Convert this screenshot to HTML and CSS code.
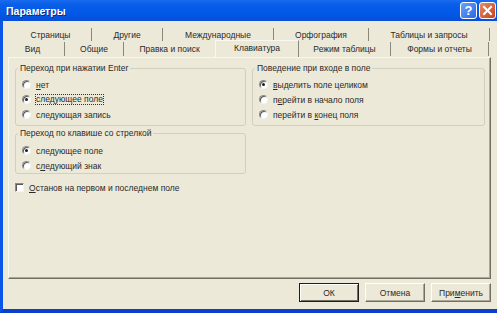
FILE: index.html
```html
<!DOCTYPE html>
<html lang="ru">
<head>
    <meta charset="UTF-8">
    <title>Параметры</title>
    <link rel="stylesheet" href="styles.css">
</head>
<body>
    <div class="window">
        <div class="titlebar">
            <span class="title">Параметры</span>
            <div class="caption-btns">
                <span class="cbtn help">?</span>
                <span class="cbtn close">
                    <svg width="11" height="11" viewBox="0 0 11 11">
                        <path d="M2 2 L9 9 M9 2 L2 9" stroke="#fff" stroke-width="2" stroke-linecap="square"/>
                    </svg>
                </span>
            </div>
        </div>
        <div class="frame">
            <!-- вкладки: задний ряд -->
            <div class="tabrow tabrow-back">
                <div class="tab t-pages">Страницы</div>
                <div class="tab t-other">Другие</div>
                <div class="tab t-intl">Международные</div>
                <div class="tab t-spell">Орфография</div>
                <div class="tab t-tables">Таблицы и запросы</div>
            </div>
            <!-- вкладки: передний ряд -->
            <div class="tabrow tabrow-front">
                <div class="tab t-view">Вид</div>
                <div class="tab t-general">Общие</div>
                <div class="tab t-edit">Правка и поиск</div>
                <div class="tab t-keys tab-active">Клавиатура</div>
                <div class="tab t-sheet">Режим таблицы</div>
                <div class="tab t-forms">Формы и отчеты</div>
            </div>
            <div class="panel">
                <div class="col">
                    <fieldset class="group">
                        <legend>Переход при нажатии Enter</legend>
                        <div class="opt"><span class="radio"></span><span><u>н</u>ет</span></div>
                        <div class="opt"><span class="radio on"></span><span class="focus">следующее поле</span></div>
                        <div class="opt"><span class="radio"></span><span>следующая запись</span></div>
                    </fieldset>
                    <fieldset class="group group-arrows">
                        <legend>Переход по клавише со стрелкой</legend>
                        <div class="opt"><span class="radio on"></span><span>следующее поле</span></div>
                        <div class="opt"><span class="radio"></span><span>с<u>л</u>едующий знак</span></div>
                    </fieldset>
                    <div class="check-row">
                        <span class="check"></span><span><u>О</u>станов на первом и последнем поле</span>
                    </div>
                </div>
                <div class="col">
                    <fieldset class="group">
                        <legend>Поведение при входе в поле</legend>
                        <div class="opt"><span class="radio on"></span><span><u>в</u>ыделить поле целиком</span></div>
                        <div class="opt"><span class="radio"></span><span>п<u>е</u>рейти в начало поля</span></div>
                        <div class="opt"><span class="radio"></span><span>перейти в <u>к</u>онец поля</span></div>
                    </fieldset>
                </div>
            </div>
            <div class="buttons">
                <div class="btn btn-default">ОК</div>
                <div class="btn">Отмена</div>
                <div class="btn">При<u>м</u>енить</div>
            </div>
        </div>
    </div>
</body>
</html>
```
FILE: styles.css
```css
*{
    box-sizing: border-box;
    margin: 0;
    padding: 0;
}
body{
    font-family: "Liberation Sans", Arial, sans-serif;
    font-size: 8.5px;
    color: #2a2a2a;
    background-color: #ECE9D8;
}
.window{
    width: 497px;
    height: 313px;
    display: flex;
    flex-direction: column;
    background-color: #ECE9D8;
}

/* заголовок окна */
.titlebar{
    height: 21px;
    display: flex;
    align-items: center;
    justify-content: space-between;
    padding: 0 1px 0 6px;
    background: linear-gradient(#1a6cf0, #0a5fe8 20%, #0058e6 65%, #0a4ed8);
}
.title{
    color: white;
    font-size: 10.5px;
    font-weight: bold;
    text-shadow: 1px 1px #0a2a8e;
    padding-top: 1px;
}
.caption-btns{
    display: flex;
    gap: 2px;
}
.cbtn{
    width: 17px;
    height: 17px;
    border: 1px solid white;
    border-radius: 3px;
    display: flex;
    align-items: center;
    justify-content: center;
    color: white;
    font-size: 13px;
    font-weight: bold;
}
.help{
    background: linear-gradient(135deg, #6aa4fa, #2a66e4);
}
.close{
    background: linear-gradient(135deg, #ec8a68, #c6401c);
}

/* рамка окна */
.frame{
    flex: 1;
    border-left: 3px solid #0b55e8;
    border-bottom: 4px solid #0a40cc;
    padding: 7px 0 0 5px;
}

/* вкладки */
.tabrow{
    display: flex;
}
.tabrow-back{
    height: 13px;
    margin-left: 2px;
}
.tabrow-front{
    height: 14px;
    margin-top: 1px;
}
.tab{
    display: flex;
    align-items: center;
    justify-content: center;
    border-right: 1px solid #8a887c;
    white-space: nowrap;
}
.t-pages{ width: 82px; }
.t-other{ width: 71px; }
.t-intl{ width: 111px; }
.t-spell{ width: 95px; }
.t-tables{ width: 121px; }
.t-view{ width: 57px; padding-right: 7px; }
.t-general{ width: 59px; }
.t-edit{ width: 91px; border-right: none; }
.t-keys{ width: 84px; }
.t-sheet{ width: 92px; }
.t-forms{ width: 98px; }
.tab-active{
    height: 17px;
    margin-top: -2px;
    padding-bottom: 3px;
    background-color: #ECE9D8;
    border-top: 1px solid #f8f7f0;
    border-left: 1px solid #f8f7f0;
    position: relative;
    z-index: 1;
}

/* содержимое вкладки */
.panel{
    width: 483px;
    height: 222px;
    margin-top: 1px;
    border-top: 1px solid #f8f7f0;
    border-left: 1px solid #f8f7f0;
    border-right: 1px solid #716f64;
    border-bottom: 1px solid #716f64;
    box-shadow: inset -1px -1px #aca899;
    display: grid;
    grid-template-columns: 231px 233px;
    column-gap: 6px;
    align-items: start;
    padding: 5px 0 0 6px;
}
.group{
    border: 1px solid #d0d0bf;
    border-radius: 3px;
    padding: 4px 0 3px 0;
    min-width: 0;
}
.group legend{
    margin-left: 2px;
    padding: 0 2px;
    height: 10px;
    line-height: 10px;
}
.group-arrows{
    margin-top: 2px;
    padding-top: 5px;
    padding-bottom: 0;
}
.opt{
    height: 15px;
    display: flex;
    align-items: center;
    gap: 5px;
    padding-left: 6px;
}
.radio{
    width: 9px;
    height: 9px;
    border-radius: 50%;
    border: 1px solid;
    border-color: #8a8a8a #f4f4f4 #f4f4f4 #8a8a8a;
    background-color: white;
    box-shadow: inset 1px 1px #5a5a5a;
    display: flex;
    align-items: center;
    justify-content: center;
}
.radio.on::after{
    content: "";
    width: 3px;
    height: 3px;
    border-radius: 50%;
    background-color: #1e1e1e;
}
.focus{
    border: 1px dotted #333;
    margin-left: -1px;
    line-height: 9px;
}
.check-row{
    height: 15px;
    margin-top: 6px;
    display: flex;
    align-items: center;
    gap: 5px;
}
.check{
    width: 9px;
    height: 9px;
    border: 1px solid;
    border-color: #8a8a8a #f4f4f4 #f4f4f4 #8a8a8a;
    background-color: white;
    box-shadow: inset 1px 1px #5a5a5a;
}

/* кнопки */
.buttons{
    width: 483px;
    margin-top: 4px;
    display: flex;
    justify-content: flex-end;
    gap: 6px;
}
.btn{
    width: 60px;
    height: 19px;
    display: flex;
    align-items: center;
    justify-content: center;
    background-color: #ECE9D8;
    border: 1px solid;
    border-color: white #716f64 #716f64 white;
    box-shadow: inset -1px -1px #aca899;
}
.btn-default{
    border-color: #1e1e1e;
    box-shadow: inset 1px 1px white, inset -1px -1px #716f64;
}
```
